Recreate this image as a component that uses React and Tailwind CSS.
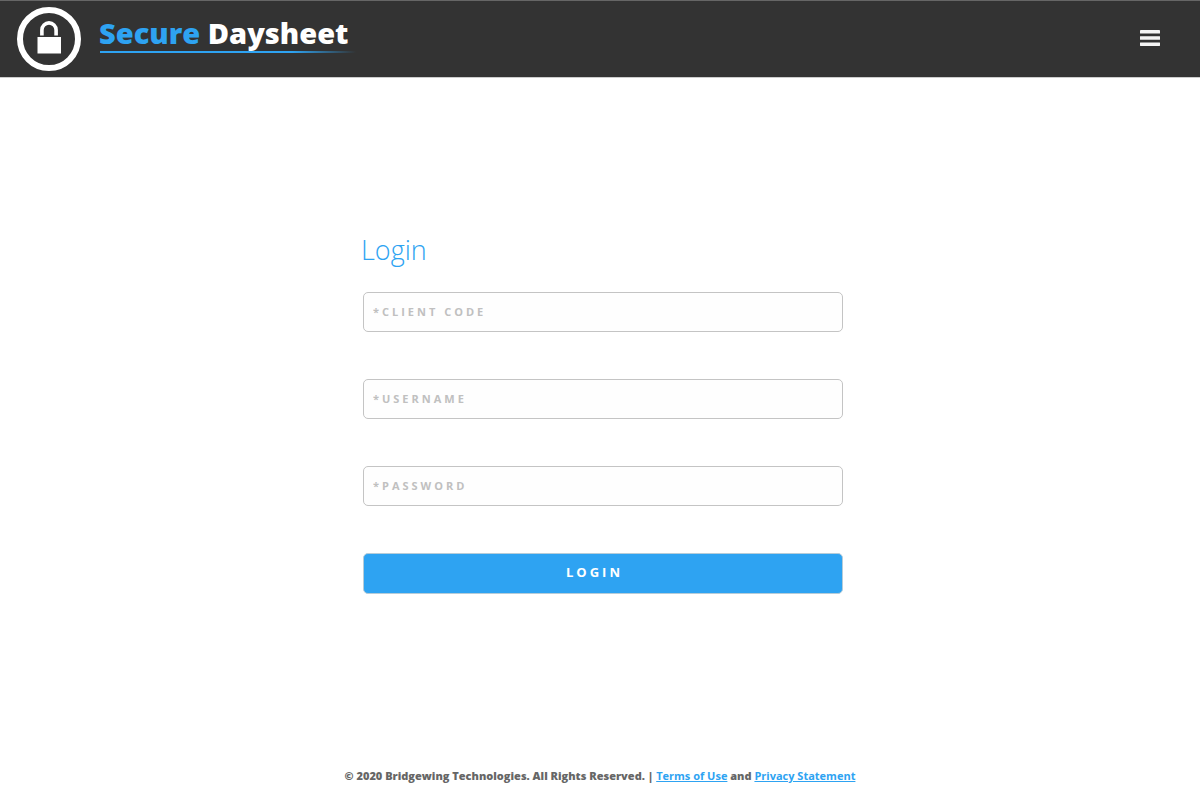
const fields = [
  { id: 'client-code', label: '*CLIENT CODE', name: 'Client code', type: 'text' },
  { id: 'username', label: '*USERNAME', name: 'Username', type: 'text' },
  { id: 'password', label: '*PASSWORD', name: 'Password', type: 'password' },
];

function LockLogo() {
  return (
    <svg viewBox="0 0 66 66" className="size-[66px]" aria-hidden="true">
      <circle cx="33" cy="33" r="29" fill="none" stroke="#fff" strokeWidth="6" />
      <path d="M25.9 29.4V24a7.1 7.1 0 0 1 14.2 0v5.4" fill="none" stroke="#fff" strokeWidth="3.6" />
      <rect x="21.5" y="31" width="23.5" height="16.5" fill="#fff" />
    </svg>
  );
}

function MenuIcon() {
  return (
    <svg viewBox="0 0 20 16" className="h-4 w-5" fill="#f5f5f5" aria-hidden="true">
      <rect width="20" height="3.6" rx="0.4" />
      <rect y="6.2" width="20" height="3.6" rx="0.4" />
      <rect y="12.4" width="20" height="3.6" rx="0.4" />
    </svg>
  );
}

function Header() {
  return (
    <header className="flex items-center justify-between border-t border-b border-t-[#666] border-b-[#ccc] bg-[#333] pr-10 pl-4">
      <div className="flex items-center gap-[17px] py-[5px]">
        <LockLogo />
        <div className="pb-2.5">
          <h1 className="pr-2 text-[29px] leading-9 font-extrabold text-white">
            <span className="text-[#2ea3f2]">Secure</span> Daysheet
          </h1>
          <div className="ml-px h-0.5 bg-linear-to-r from-[#2ea3f2] from-75% to-transparent" />
        </div>
      </div>
      <button type="button" aria-label="Menu" className="pb-0.5">
        <MenuIcon />
      </button>
    </header>
  );
}

function LoginForm() {
  return (
    <form className="flex w-full max-w-[480px] flex-col" onSubmit={(e) => e.preventDefault()}>
      <h2 className="-ml-0.5 mb-6 text-[27px] leading-9 font-light text-[#2ea3f2]">Login</h2>
      <div className="flex flex-col gap-[47px]">
        {fields.map((field) => (
          <input
            key={field.id}
            id={field.id}
            type={field.type}
            aria-label={field.name}
            placeholder={field.label}
            className="h-10 w-full rounded-[5px] border border-[#c4c4c4] bg-[#fefefe] px-[9px] pb-0.5 text-[11px] font-bold tracking-[3px] placeholder:text-[#c0c0c0]"
          />
        ))}
        <button
          type="submit"
          className="h-[41px] w-full rounded-[5px] border border-[#b5ccd9] bg-[#2ea3f2] pr-[17px] pb-0.5 text-[13px] font-bold tracking-[3px] text-white"
        >
          LOGIN
        </button>
      </div>
    </form>
  );
}

export default function App() {
  return (
    <div className="flex min-h-screen flex-col bg-white font-['Open_Sans',sans-serif]">
      <Header />
      <main className="flex grow justify-center pt-[154px] pl-1.5">
        <LoginForm />
      </main>
      <footer className="pb-4 text-center text-[11px] leading-4 font-extrabold text-[#666]">
        © 2020 Bridgewing Technologies. All Rights Reserved. |{' '}
        <a href="#terms" className="font-bold text-[#2ea3f2] underline">
          Terms of Use
        </a>{' '}
        and{' '}
        <a href="#privacy" className="font-bold text-[#2ea3f2] underline">
          Privacy Statement
        </a>
      </footer>
    </div>
  );
}
